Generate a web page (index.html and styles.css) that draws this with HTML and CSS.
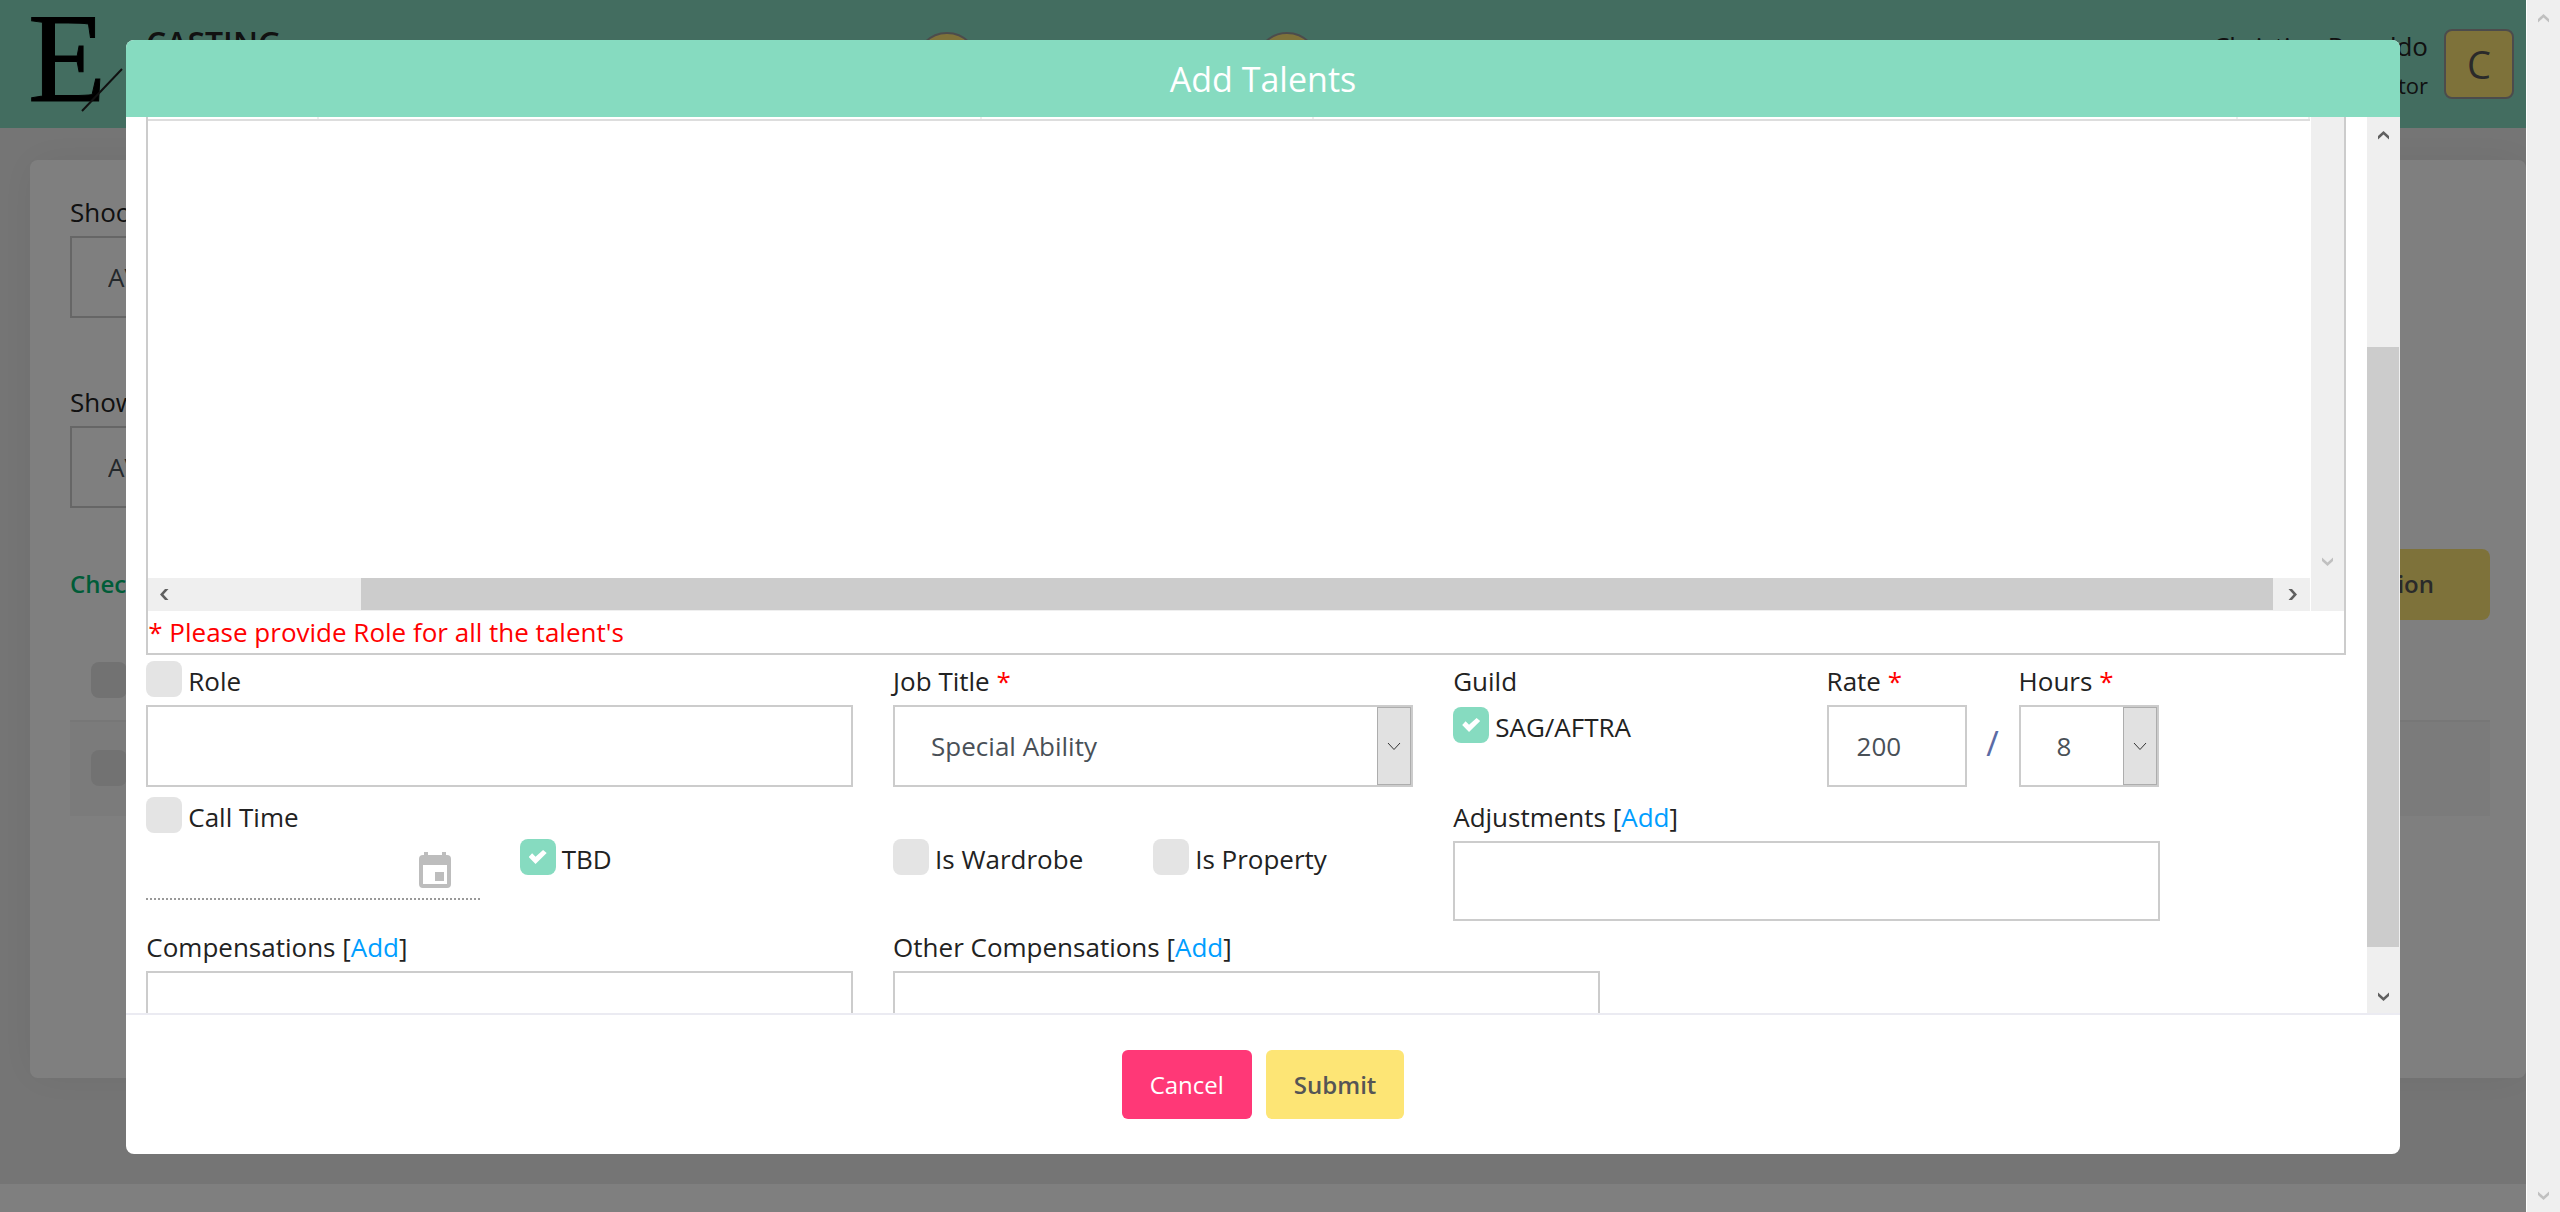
FILE: index.html
```html
<!DOCTYPE html>
<html lang="en">
<head>
<meta charset="utf-8">
<title>Add Talents</title>
<meta name="viewport" content="width=device-width, initial-scale=1">
<link rel="stylesheet" href="styles.css">
</head>
<body>
<div class="window">
  <div class="page">
    <header class="topbar">
      <svg class="logo" width="96" height="96" viewBox="0 0 96 96" aria-label="E">
        <text class="logo-letter" x="-2" y="85">E</text>
        <path d="M92 53 52 95" stroke="#222" stroke-width="2" fill="none"/>
      </svg>
      <span class="brand">CASTING</span>
      <nav class="steps">
        <span class="step"></span>
        <span class="step"></span>
      </nav>
      <div class="user">
        <span class="user-name">Christian Ronaldo</span>
        <span class="user-role">Director</span>
      </div>
      <span class="avatar">C</span>
    </header>
    <main class="card">
      <div class="filter">
        <label for="shoot">Shoot</label>
        <select id="shoot" class="control"><option>AV</option></select>
      </div>
      <div class="filter">
        <label for="show">Show</label>
        <select id="show" class="control"><option>AV</option></select>
      </div>
      <div class="toolbar">
        <a class="check-link" href="#">Check</a>
        <button class="btn btn-session" type="button">Session</button>
      </div>
      <div class="list-row"><input type="checkbox" aria-label="Select row 1"></div>
      <div class="list-row list-row-alt"><input type="checkbox" aria-label="Select row 2"></div>
    </main>
    <footer class="page-footer"></footer>
    <div class="overlay">
      <section class="modal" role="dialog" aria-labelledby="modal-title">
        <h1 class="modal-title" id="modal-title">Add Talents</h1>
        <div class="modal-body">
          <form class="modal-content" id="talent-form">
            <div class="talents">
              <div class="talents-view">
                <div class="talents-rows">
                  <div class="talents-head"><span></span><span></span><span></span><span></span><span></span></div>
                </div>
                <div class="scroll scroll-y scroll-faint">
                  <i></i>
                  <svg width="11" height="9"><path d="M0 0.5V4L5.5 9 11 4V.5L5.5 5.5z"/></svg>
                </div>
                <div class="scroll scroll-x">
                  <svg width="9" height="11"><path d="M8.5 0H5L0 5.5 5 11h3.5L3.5 5.5z"/></svg>
                  <span class="thumb"></span>
                  <svg width="9" height="11"><path d="M.5 0H4L9 5.5 4 11H.5L5.5 5.5z"/></svg>
                </div>
                <div class="scroll"></div>
              </div>
              <p class="error">* Please provide Role for all the talent's</p>
            </div>

            <div class="grid">
              <div class="span-4">
                <div class="check label-line"><input type="checkbox" id="role-on"><label for="role-on">Role</label></div>
                <input class="control" type="text" aria-label="Role">
              </div>
              <div class="span-3">
                <label class="label-line" for="job">Job Title <b class="req">*</b></label>
                <div class="select">
                  <select class="control" id="job"><option>Special Ability</option></select>
                  <span class="arrow"><svg width="14" height="9"><path d="M1 1l6 6.500 6-6.500"/></svg></span>
                </div>
              </div>
              <div class="span-2">
                <span class="label-line">Guild</span>
                <div class="check guild"><input type="checkbox" id="sag" checked><label for="sag">SAG/AFTRA</label></div>
              </div>
              <div class="span-3 rate">
                <div class="rate-field">
                  <label class="label-line" for="rate">Rate <b class="req">*</b></label>
                  <input class="control" type="text" id="rate" value="200">
                </div>
                <span class="slash">/</span>
                <div class="rate-field">
                  <label class="label-line" for="hours">Hours <b class="req">*</b></label>
                  <div class="select">
                    <select class="control" id="hours"><option>8</option></select>
                    <span class="arrow"><svg width="14" height="9"><path d="M1 1l6 6.500 6-6.500"/></svg></span>
                  </div>
                </div>
              </div>
            </div>

            <div class="grid grid-second">
              <div class="span-2">
                <div class="check label-line"><input type="checkbox" id="call-on"><label for="call-on">Call Time</label></div>
                <div class="date">
                  <input type="text" aria-label="Call Time">
                  <svg width="32" height="36" viewBox="0 0 32 36"><path fill-rule="evenodd" d="M5 0h4v3h14V0h4v3h1a4 4 0 0 1 4 4v25a4 4 0 0 1-4 4H4a4 4 0 0 1-4-4V7a4 4 0 0 1 4-4h1zM4 13v19h24V13zM16 20h9v9h-9z"/></svg>
                </div>
              </div>
              <div class="span-2 lowered">
                <div class="check"><input type="checkbox" id="tbd" checked><label for="tbd">TBD</label></div>
              </div>
              <div class="span-3 lowered flags">
                <div class="check"><input type="checkbox" id="wardrobe"><label for="wardrobe">Is Wardrobe</label></div>
                <div class="check"><input type="checkbox" id="property"><label for="property">Is Property</label></div>
              </div>
              <div class="span-4">
                <div class="label-line"><label for="adjustments">Adjustments</label> [<a href="#">Add</a>]</div>
                <textarea class="control area" id="adjustments"></textarea>
              </div>
            </div>

            <div class="grid">
              <div class="span-4">
                <div class="label-line"><label for="comp">Compensations</label> [<a href="#">Add</a>]</div>
                <textarea class="control area" id="comp"></textarea>
              </div>
              <div class="span-4">
                <div class="label-line"><label for="other-comp">Other Compensations</label> [<a href="#">Add</a>]</div>
                <textarea class="control area" id="other-comp"></textarea>
              </div>
            </div>
          </form>
          <div class="scroll scroll-y scroll-modal">
            <svg width="11" height="9"><path d="M0 8.500V5L5.500 0 11 5v3.500L5.500 3.500z"/></svg>
            <span class="thumb"></span>
            <svg width="11" height="9"><path d="M0 0.5V4L5.5 9 11 4V.5L5.5 5.5z"/></svg>
          </div>
        </div>
        <div class="modal-footer">
          <button class="btn btn-cancel" type="button">Cancel</button>
          <button class="btn btn-submit" type="submit" form="talent-form">Submit</button>
        </div>
      </section>
    </div>
  </div>
  <div class="scroll scroll-y scroll-faint scroll-page">
    <svg width="11" height="9"><path d="M0 8.500V5L5.500 0 11 5v3.500L5.500 3.500z"/></svg>
    <svg width="11" height="9"><path d="M0 0.5V4L5.5 9 11 4V.5L5.5 5.5z"/></svg>
  </div>
</div>
</body>
</html>
```
FILE: styles.css
```css
* { box-sizing: border-box; }

body {
  margin: 0;
  font: 26px/40px "Segoe UI", "Open Sans", "Noto Sans", sans-serif;
  color: #222;
}

input, select, textarea, button { font: inherit; margin: 0; }
a { color: #009eff; text-decoration: none; }

.window { display: flex; height: 100vh; overflow: hidden; }

.page {
  position: relative;
  flex: 1;
  min-width: 0;
  display: flex;
  flex-direction: column;
  overflow: hidden;
  background: #ebebeb;
}

/* Top bar */
.topbar {
  display: flex;
  align-items: flex-start;
  flex: none;
  height: 128px;
  padding: 16px 12px 0 30px;
  background: #86dbc0;
}
.logo { overflow: visible; flex: none; }
.logo-letter { font: 128px "Liberation Serif", serif; fill: #000; stroke: #000; stroke-width: 1px; }
.brand { width: 134px; margin: 7px 0 0 20px; font-size: 32px; font-weight: 600; }
.steps { flex: 1; display: flex; gap: 276px; margin-left: 635px; padding-top: 16px; }
.step { width: 64px; height: 64px; border: 2px solid #999; border-radius: 50%; background: #fde574; }
.user { display: flex; flex-direction: column; padding-top: 12px; text-align: right; line-height: 36px; }
.user-role { font-size: 22px; line-height: 42px; }
.avatar {
  width: 70px;
  height: 70px;
  margin: 13px 0 0 16px;
  border: 2px solid #999;
  border-radius: 8px;
  background: #fde574;
  color: #555;
  font-size: 38px;
  line-height: 66px;
  text-align: center;
}

/* Card under the dialog */
.card {
  flex: 1;
  margin: 32px 0 106px 30px;
  padding: 32px 36px 0 40px;
  border-radius: 8px;
  background: #fff;
  box-shadow: 0 0 40px rgba(0, 0, 0, .06);
}
.filter { display: flex; flex-direction: column; width: 560px; margin-bottom: 64px; }
.filter label { margin-bottom: 4px; }
.card .control { background: transparent; }
.toolbar { display: flex; justify-content: space-between; align-items: center; height: 72px; margin: -24px 0 10px; }
.check-link { color: #00b870; font-size: 24px; font-weight: 600; }
.list-row { height: 92px; padding: 32px 21px; border-bottom: 2px solid #eee; }
.list-row-alt { height: 94px; padding: 28px 21px; border: 0; background: #f6f6f6; }
.page-footer { flex: none; height: 28px; background: #fff; }

/* Controls */
input[type="checkbox"] {
  appearance: none;
  display: block;
  flex: none;
  width: 36px;
  height: 36px;
  border-radius: 8px;
  background: #e4e4e4;
}
input[type="checkbox"]:checked { display: grid; place-items: center; background: #86dbc0; }
input[type="checkbox"]:checked::before {
  content: "";
  width: 18px;
  height: 14px;
  background: #fff;
  clip-path: polygon(0 50%, 19% 24%, 38% 48%, 80% 0, 100% 22%, 38% 100%);
}
.check { display: flex; gap: 6px; }
.label-line { display: block; height: 40px; margin-bottom: 4px; }
.check.label-line { display: flex; }
.control {
  display: block;
  width: 100%;
  height: 82px;
  padding: 0 28px;
  border: 2px solid #ccc;
  border-radius: 0;
  background: #fff;
  color: #495057;
}
select.control { appearance: none; padding: 0 36px; }
.area { height: 80px; resize: none; }
.req { color: #f00; font-weight: 400; }
.select { position: relative; }
.arrow {
  position: absolute;
  top: 2px;
  right: 2px;
  bottom: 2px;
  width: 34px;
  display: grid;
  place-items: center;
  border: 1px solid #adadad;
  background: #e1e1e1;
  pointer-events: none;
}
.arrow path { fill: none; stroke: #333; stroke-width: 1; }

.btn {
  height: 69px;
  padding: 0 28px;
  border: 0;
  border-radius: 6px;
  font-size: 24px;
}
.btn-cancel { background: #ff3877; color: #fff; }
.btn-submit, .btn-session { background: #fde575; color: #555; font-weight: 600; }
.btn-session { height: 71px; padding: 0 56px; border-radius: 8px; }

/* Dialog */
.overlay {
  position: absolute;
  inset: 0;
  display: flex;
  padding: 40px 5% 58px;
  background: rgba(0, 0, 0, .5);
}
.modal {
  flex: 1;
  min-width: 0;
  display: flex;
  flex-direction: column;
  border-radius: 8px;
  overflow: hidden;
  background: #fff;
}
.modal-title {
  flex: none;
  height: 77px;
  margin: 0;
  background: #86dbc0;
  color: #fff;
  font-size: 34px;
  font-weight: 400;
  line-height: 78px;
  text-align: center;
}
.modal-body { flex: 1; min-height: 0; display: flex; overflow: hidden; }
.modal-content { flex: 1; min-width: 0; }
.modal-footer {
  flex: none;
  display: flex;
  justify-content: center;
  gap: 14px;
  padding: 35px 0;
  border-top: 2px solid #ebebf2;
}

/* Scroll bars */
.scroll { display: flex; align-items: center; background: #efefef; }
.scroll path { fill: #606060; }
.scroll-faint path { fill: #c0c0c0; }
.scroll-y { flex-direction: column; justify-content: space-between; width: 33px; padding: 14px 0 12px; }
.scroll-x { justify-content: space-between; gap: 15px; margin-right: 1px; padding: 0 13px 0 12px; }
.scroll .thumb { background: #ccc; }
.scroll-x .thumb { flex: 1; height: 32px; margin: 0 0 1px 177px; }
.scroll-page { width: 34px; border-left: 1px solid #fff; }
.scroll-modal .thumb { flex: 1; width: 32px; margin: 207px 1px 45px 0; }

/* Talents list */
.talents { margin: 0 21px 0 20px; border: solid #ccc; border-width: 0 2px 2px; }
.talents-view { display: grid; grid-template: 461px 33px / 1fr 33px; }
.talents-head { display: flex; height: 4px; margin-right: 1px; border-bottom: 2px solid #ddd; }
.talents-head span { flex: 926; border-right: 2px solid #eee; }
.talents-head span:nth-child(1) { flex: 169; }
.talents-head span:nth-child(2) { flex: 664; }
.talents-head span:nth-child(3) { flex: 332; }
.talents-head span:nth-child(5) { flex: 70; }
.error { margin: 0; color: #f00; line-height: 42px; }

/* Form rows */
.grid { display: grid; grid-template-columns: repeat(12, 1fr); padding-top: 6px; }
.grid > div { min-width: 0; padding: 0 20px; }
.grid-second { padding-top: 10px; }
.span-2 { grid-column: span 2; }
.span-3 { grid-column: span 3; }
.span-4 { grid-column: span 4; }
.guild { padding-top: 2px; }
.rate { display: flex; }
.rate-field { width: 140px; }
.slash { width: 52px; padding-top: 62px; color: #5b6ba5; font-size: 34px; text-align: center; }
.lowered { margin-top: 42px; }
.flags { display: grid; grid-template-columns: 1fr 1fr; align-items: start; }
.date { display: flex; align-items: center; height: 59px; padding-right: 29px; border-bottom: 2px dotted #999; }
.date input { flex: 1; min-width: 0; height: 50px; border: 0; background: none; }
.date path { fill: #bdbdbd; }
```
